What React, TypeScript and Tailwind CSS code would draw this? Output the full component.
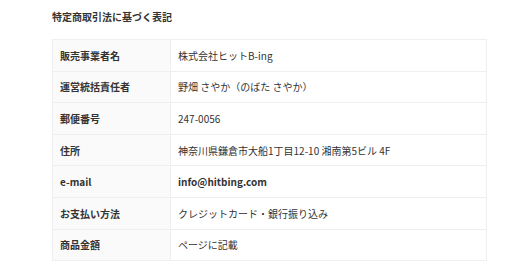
import React from "react";

const rows: { label: string; value: string; bold?: boolean }[] = [
  { label: "販売事業者名", value: "株式会社ヒットB-ing" },
  { label: "運営統括責任者", value: "野畑 さやか（のばた さやか）" },
  { label: "郵便番号", value: "247-0056" },
  { label: "住所", value: "神奈川県鎌倉市大船1丁目12-10 湘南第5ビル 4F" },
  { label: "e-mail", value: "info@hitbing.com", bold: true },
  { label: "お支払い方法", value: "クレジットカード・銀行振り込み" },
  { label: "商品金額", value: "ページに記載" },
];

export default function App() {
  return (
    <div
      className="w-[512px] h-[275px] bg-white text-[#333] overflow-hidden"
      style={{ fontFamily: '"Noto Sans CJK JP", "Noto Sans", sans-serif' }}
    >
      <div className="pl-[52px] pr-[25px] pt-[9px]">
        <h1 className="text-[10px] font-bold leading-[16px] text-[#333]">特定商取引法に基づく表記</h1>
        <table className="mt-[14px] w-[435px] border-collapse border border-[#efefef] text-[10px]">
          <tbody>
            {rows.map((r) => (
              <tr key={r.label} className="h-[31.6px]">
                <th className="w-[118px] border border-[#efefef] bg-[#fafafa] pl-[7px] text-left font-bold align-middle">
                  {r.label}
                </th>
                <td
                  className={`border border-[#efefef] bg-white pl-[7px] align-middle ${
                    r.bold ? "font-bold" : "font-normal"
                  }`}
                >
                  {r.value}
                </td>
              </tr>
            ))}
          </tbody>
        </table>
      </div>
    </div>
  );
}
